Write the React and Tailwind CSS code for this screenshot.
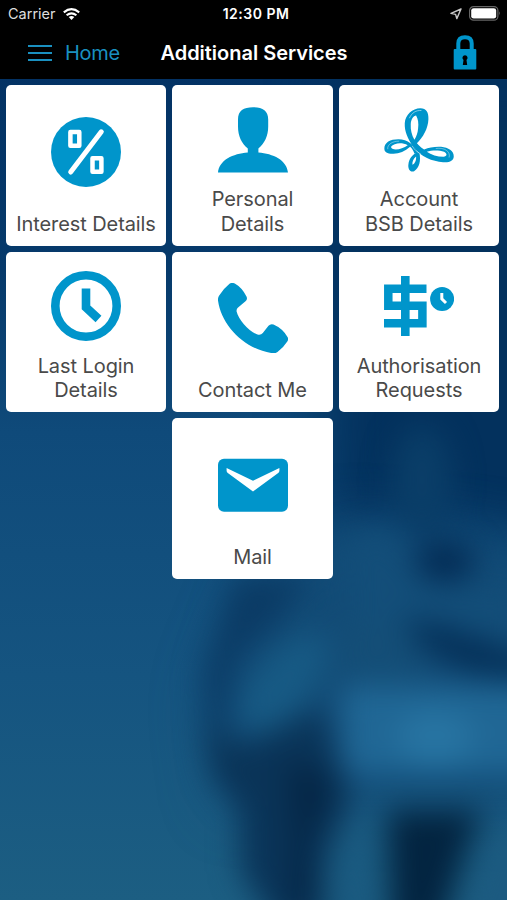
import React from 'react';

const InterestIcon = () => (
  <svg viewBox="0 0 70 70" className="size-[70px]" fill="none">
    <circle cx="35" cy="35" r="35" fill="#0095cb" />
    <g stroke="#fff" strokeWidth="4.5" strokeLinejoin="round" strokeLinecap="round">
      <path d="M50.3 14.8L19.7 55" strokeWidth="5" />
      <rect x="19.4" y="15" width="8.9" height="13.7" />
      <rect x="41.5" y="41.3" width="8.9" height="13.4" />
    </g>
  </svg>
);

const PersonIcon = () => (
  <svg viewBox="0 0 70 70" className="size-[70px]" fill="#0095cb">
    <path d="M35 2.2C44.5 2.2 50.2 5.5 50.2 14.5V21.5C50.2 31 46.5 38.5 40.4 43.5V47.4C55 48.5 69 55 70 67.6H0C1 55 15 48.5 29.8 47.4V43.5C23.6 38.5 20 31 20 21.5V14.5C20 5.5 25.5 2.2 35 2.2Z" />
  </svg>
);

const RibbonIcon = () => (
  <svg viewBox="12.75 7.5 210 210" className="size-[70px]" fill="#0095cb">
    {/* left loop */}
    <path fillRule="evenodd" d="M14 140C12 121 30 110 56 110C84 111 104 126 116 152L104 153C101 145 97 138 91 133C75 148 56 155 38 154C22 153 14 148 14 140ZM84 128C72 122 57 121 45 125C33 129 31 135 38 139C50 144 70 138 84 128Z" />
    <path d="M24 140C22 126 38 116 58 116" fill="none" stroke="#fff" strokeWidth="1.2" />
    {/* bottom loop */}
    <path fillRule="evenodd" d="M119 151C124 175 119 196 103 206C91 210 84 199 86 185C88 170 97 157 110 151ZM109 162C101 168 97 178 98 187C105 184 110 174 109 162Z" />
    {/* top loop */}
    <path fillRule="evenodd" d="M98 128C84 108 74 86 75 62C77 36 98 17 122 17C140 17 147 30 146 50C145 78 130 104 110 124ZM104 112C96 97 92 82 93 65C94 50 101 40 109 39C115 49 117 62 115 78C114 91 110 102 104 112Z" />
    <path d="M89 47C96 31 108 23 125 24" fill="none" stroke="#fff" strokeWidth="1.5" />
    {/* right loop */}
    <path fillRule="evenodd" d="M88 108L102 110C111 123 121 133 133 141C148 135 165 132 184 133C206 135 222 146 222 161C222 175 208 181 190 179C158 177 122 163 104 136C98 128 92 118 88 108ZM141 148C154 157 173 163 191 163C203 162 203 153 193 148C177 142 156 143 141 148Z" />
    <path d="M168 138C194 134 213 147 208 165" fill="none" stroke="#fff" strokeWidth="1.2" />
    <path d="M97 130C104 142 113 149 124 155" fill="none" stroke="#fff" strokeWidth="1.5" />
  </svg>
);

const ClockIcon = () => (
  <svg viewBox="0 0 70 70" className="size-[70px]" fill="none" stroke="#0095cb">
    <circle cx="35" cy="35" r="30.7" strokeWidth="8.6" />
    <path d="M35 17.5V36.3L47.5 48" strokeWidth="8.6" />
  </svg>
);

const PhoneIcon = () => (
  <svg viewBox="0 0 70 70" className="size-[70px]" fill="#0095cb">
    <path d="M11.5 .7Q14 -.8 16.8 .5Q24 4.5 28.5 13.5Q29.8 16.3 27.5 18.3L19.8 24.8Q18.3 26.2 18.6 28.5C20.5 37 31 48.5 39.5 51.5Q42.8 52.5 44.8 50L50.5 42.8Q52.5 40.6 55.5 41.6Q64.5 45.5 69.5 54Q70.8 56.3 69.3 58.5Q65.5 64.5 59.5 69Q57.5 70.6 54.5 70.2C27 66.5 3.5 43 0 17.5Q-.3 14.7 1.2 12.5Q5.5 5.5 11.5 .7Z" />
  </svg>
);

const AuthorisationIcon = () => (
  <svg viewBox="0 0 70 70" className="size-[70px]" fill="none">
    <path d="M42.5 17.8H4.3V34.8H38.4V52.3H0" stroke="#0095cb" strokeWidth="8.5" />
    <path d="M21.3 5V65" stroke="#0095cb" strokeWidth="8.6" />
    <circle cx="58.1" cy="28" r="12" fill="#0095cb" />
    <path d="M57.8 22V27.8L62 32" stroke="#fff" strokeWidth="3" />
  </svg>
);

const MailIcon = () => (
  <svg viewBox="0 0 70 70" className="size-[70px]">
    <rect y="8.7" width="70" height="53" rx="6" fill="#0095cb" />
    <path d="M8.6 18V20.8Q8.6 22 9.8 22.9L35 41.5L60.2 22.9Q61.4 22 61.4 20.8V18L35 30.7Z" fill="#fff" />
  </svg>
);

const services = [
  { lines: ['Interest Details'], Icon: InterestIcon },
  { lines: ['Personal', 'Details'], Icon: PersonIcon },
  { lines: ['Account', 'BSB Details'], Icon: RibbonIcon },
  { lines: ['Last Login', 'Details'], Icon: ClockIcon },
  { lines: ['Contact Me'], Icon: PhoneIcon },
  { lines: ['Authorisation', 'Requests'], Icon: AuthorisationIcon },
  { lines: ['Mail'], Icon: MailIcon },
];

const Backdrop = () => (
  <svg viewBox="0 0 507 900" preserveAspectRatio="none" className="absolute inset-0 w-full h-full">
    <defs>
      <linearGradient id="sea" x1="0" y1="0" x2="0" y2="1">
        <stop offset="0.08" stopColor="#033264" />
        <stop offset="0.3" stopColor="#063a6b" />
        <stop offset="0.48" stopColor="#0f4a7a" />
        <stop offset="0.75" stopColor="#155480" />
        <stop offset="1" stopColor="#1c5e82" />
      </linearGradient>
      <filter id="soft" filterUnits="userSpaceOnUse" x="-100" y="-100" width="800" height="1200" colorInterpolationFilters="sRGB">
        <feGaussianBlur stdDeviation="15" />
      </filter>
      <filter id="softer" filterUnits="userSpaceOnUse" x="-100" y="-100" width="800" height="1200" colorInterpolationFilters="sRGB">
        <feGaussianBlur stdDeviation="30" />
      </filter>
    </defs>
    <rect width="507" height="900" fill="url(#sea)" />
    <path d="M335 60H600V560L430 520L320 540Z" fill="#03315d" filter="url(#softer)" />
    <path d="M260 590L340 530L600 560V800H230L215 700Z" fill="#124b76" filter="url(#softer)" />
    <g filter="url(#soft)">
      <ellipse cx="422" cy="480" rx="30" ry="55" fill="#0a3e68" />
      <path d="M345 535L390 530L430 590L520 595V640L430 620L350 620Z" fill="#134e79" />
      <ellipse cx="445" cy="561" rx="30" ry="20" fill="#032b54" />
      <path d="M235 575H312L280 620L238 660L226 730L208 740L204 670Z" fill="#0b3b65" />
      <path d="M345 620H400L430 680H340Z" fill="#144e77" />
      <path d="M320 628L330 660L300 710L262 735L238 722L240 690L275 650Z" fill="#175a84" />
      <path d="M205 725L245 745L320 708L345 775L350 800L325 860L322 940H285L240 870L240 810L212 775Z" fill="#0a3458" />
      <path d="M405 618L450 628L540 662V682L470 672L420 645Z" fill="#042f57" />
      <path d="M342 686H540V774H342Z" fill="#206795" />
      <ellipse cx="435" cy="738" rx="38" ry="28" fill="#2774a2" />
      <path d="M285 762L332 772L330 805L312 835L318 910H290L292 840Z" fill="#052747" />
      <path d="M342 830L368 810L376 940H325Z" fill="#1a5a80" />
      <path d="M388 810H482L466 850L438 940H392Z" fill="#032440" />
      <path d="M500 835H550V940H462Z" fill="#1c5a80" />
    </g>
  </svg>
);

const StatusBar = () => (
  <div className="h-[27px] flex items-center justify-between pl-2 pr-[6px] text-white">
    <div className="flex-1 flex items-center gap-[7px]">
      <span className="text-[14.5px] text-[#dedede]">Carrier</span>
      <svg viewBox="0 0 17 12" className="w-[17px] h-3" fill="none" stroke="#fff" strokeWidth="2.1">
        <path d="M.8 4.4Q8.5 -2 16.2 4.4" />
        <path d="M3.6 7.3Q8.5 3.3 13.4 7.3" />
        <path d="M8.5 12L5.7 9.1Q8.5 7 11.3 9.1Z" fill="#fff" stroke="none" />
      </svg>
    </div>
    <span className="pl-[3px] text-[14px] font-semibold tracking-[0.5px]">12:30 PM</span>
    <div className="flex-1 flex items-center justify-end gap-[7px]">
      <svg viewBox="0 0 12 12" className="size-3" fill="none" stroke="#c8c8c8" strokeWidth="1.4" strokeLinejoin="round">
        <path d="M11 1L1 5.4L5.6 6.4L6.8 10.6Z" />
      </svg>
      <svg viewBox="0 0 32 15" className="w-8 h-[15px]">
        <rect x="0.6" y="0.6" width="28.3" height="13.6" rx="4" fill="none" stroke="#666" strokeWidth="1.2" />
        <rect x="2.2" y="2.2" width="25" height="10.4" rx="2.4" fill="#fff" />
        <path d="M30.3 5.3Q32 7.4 30.3 9.5Z" fill="#777" />
      </svg>
    </div>
  </div>
);

export default function App() {
  return (
    <div className="relative w-[507px] h-[900px] overflow-hidden bg-[#0f4a7a] font-['Inter','Liberation_Sans',sans-serif]">
      <Backdrop />

      <div className="relative flex flex-col h-full">
        {/* HEADER */}
        <header className="h-[79px] bg-black">
          <StatusBar />
          <div className="h-[51px] flex items-center justify-between pl-7 pr-[30px]">
            <button className="flex-1 flex items-center gap-[13px] text-[#1a90c0]">
              <span className="flex flex-col gap-[5px]">
                <span className="w-6 h-[2px] bg-[#1a90c0]"></span>
                <span className="w-6 h-[2px] bg-[#1a90c0]"></span>
                <span className="w-6 h-[2px] bg-[#1a90c0]"></span>
              </span>
              <span className="text-[20px] leading-6 tracking-[-0.3px]">Home</span>
            </button>
            <h1 className="pl-[3px] text-white text-[20px] font-semibold tracking-[-0.02px]">Additional Services</h1>
            <button className="flex-1 flex justify-end">
              <svg viewBox="0 0 24 35" className="w-6 h-[35px]" fill="#0095cb">
                <path d="M5.3 16V8.5Q5.3 2.2 12 2.2T18.7 8.5V16" fill="none" stroke="#0095cb" strokeWidth="4" />
                <rect x="0.7" y="14" width="22.6" height="20.5" rx="1" />
                <path d="M12 20.3a2.6 2.6 0 0 1 1.5 4.7L14.2 30H9.8L10.5 25A2.6 2.6 0 0 1 12 20.3Z" fill="#000" />
              </svg>
            </button>
          </div>
        </header>

        {/* SERVICE TILES */}
        <main className="flex flex-wrap justify-center gap-[6px] pt-[6px] pl-1 pr-[6px]">
          {services.map(({ lines, Icon }) => (
            <button
              key={lines.join(' ')}
              className="w-[160.5px] h-[160.5px] pt-[7px] pb-[9.5px] bg-white rounded-[5px] flex flex-col items-center"
            >
              <span className="flex-1 flex items-center">
                <Icon />
              </span>
              <span className="text-[#4a4a4a] text-[20px] leading-[24.5px] tracking-[-0.08px]">
                {lines.map((line) => (
                  <span key={line} className="block whitespace-nowrap">{line}</span>
                ))}
              </span>
            </button>
          ))}
        </main>
      </div>
    </div>
  );
}
